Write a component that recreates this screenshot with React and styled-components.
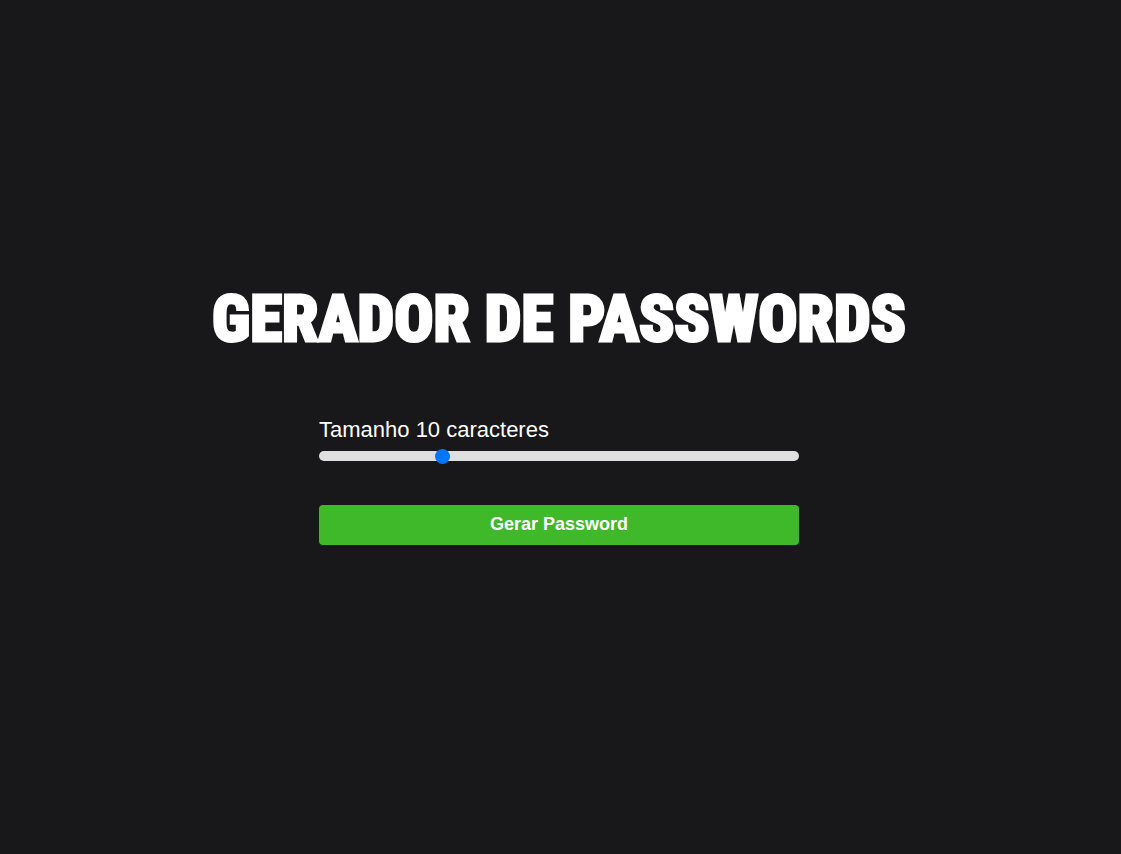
import React, { useState } from "react";
import styled, { createGlobalStyle } from "styled-components";

const GlobalStyle = createGlobalStyle`
  * { box-sizing: border-box; }
  body {
    margin: 0;
    background: #18181a;
    color: #fff;
    font-family: "Liberation Sans", Arial, sans-serif;
  }
`;

const Page = styled.main`
  min-height: 100vh;
  display: flex;
  flex-direction: column;
  align-items: center;
  justify-content: center;
  padding: 0 3px 22px 0;
`;

const Title = styled.h1`
  margin: 0 0 66px;
  font-family: "Roboto Condensed", "Liberation Sans Narrow", "Liberation Sans", sans-serif;
  font-size: 65px;
  font-weight: 800;
  line-height: 64px;
  text-align: center;
  text-transform: uppercase;
  -webkit-text-stroke: 3px #fff;
`;

const Form = styled.form`
  width: 480px;
  max-width: 90%;
  display: flex;
  flex-direction: column;
`;

const Label = styled.label`
  font-size: 22px;
  line-height: 26px;
  margin-bottom: 8px;
`;

const Slider = styled.input`
  appearance: none;
  width: 100%;
  height: 10px;
  margin: 0 0 44px;
  border-radius: 5px;
  background: #dfdfdf;
  cursor: pointer;

  &::-webkit-slider-thumb {
    appearance: none;
    width: 15px;
    height: 15px;
    border-radius: 50%;
    background: #0075ff;
  }
`;

const Button = styled.button`
  height: 40px;
  padding: 0 0 2px;
  border: 0;
  border-radius: 4px;
  background: #3fb829;
  color: #fff;
  font-family: inherit;
  font-size: 18px;
  font-weight: 700;
  cursor: pointer;
`;

export default function App() {
  const [size, setSize] = useState(10);
  return (
    <>
      <GlobalStyle />
      <Page>
        <Title>Gerador de Passwords</Title>
        <Form onSubmit={(event) => event.preventDefault()}>
          <Label htmlFor="size">Tamanho {size} caracteres</Label>
          <Slider
            id="size"
            type="range"
            min="5"
            max="25"
            value={size}
            onChange={(event) => setSize(Number(event.target.value))}
          />
          <Button type="submit">Gerar Password</Button>
        </Form>
      </Page>
    </>
  );
}
